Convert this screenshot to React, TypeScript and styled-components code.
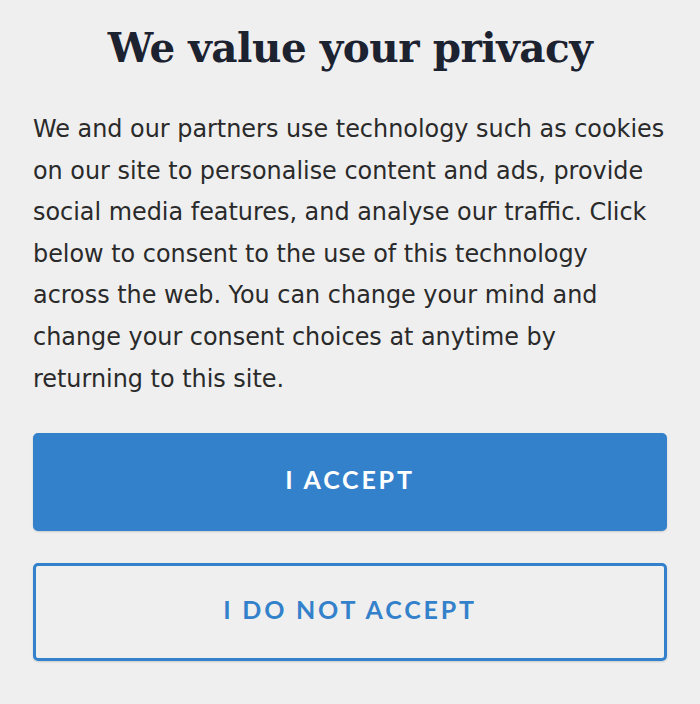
import React from "react";
import styled, { createGlobalStyle } from "styled-components";

const Global = createGlobalStyle`
  html, body { margin: 0; padding: 0; background: #efefef; }
  body { -webkit-font-smoothing: antialiased; }
`;

const Page = styled.main`
  width: 700px;
  height: 704px;
  box-sizing: border-box;
  padding: 22px 33px 0 33px;
  background: #efefef;
  display: flex;
  flex-direction: column;
  overflow: hidden;
`;

const Title = styled.h1`
  margin: 0;
  text-align: center;
  font-family: "DejaVu Serif", "Liberation Serif", serif;
  font-weight: 700;
  font-size: 40.5px;
  line-height: 52px;
  color: #1c2230;
  letter-spacing: -0.5px;
`;

const Body = styled.p`
  margin: 35px 0 0 0;
  font-family: "DejaVu Sans", "Noto Sans", sans-serif;
  font-size: 23.9px;
  line-height: 41.6px;
  color: #2a2a2a;
`;

const Actions = styled.div`
  display: flex;
  flex-direction: column;
  gap: 32px;
  margin-top: 33px;
`;

const Button = styled.button<{ $primary?: boolean }>`
  height: 98px;
  box-sizing: border-box;
  padding: 0 0 7px 0;
  border-radius: 5px;
  border: 3px solid #3481cb;
  background: ${(p) => (p.$primary ? "#3481cb" : "transparent")};
  color: ${(p) => (p.$primary ? "#ffffff" : "#3481cb")};
  font-family: Lato, "Noto Sans", sans-serif;
  font-weight: 700;
  font-size: 25px;
  letter-spacing: 2.8px;
  box-shadow: 0 1px 2px rgba(0, 0, 0, 0.15);
  cursor: pointer;
`;

export default function App() {
  return (
    <>
      <Global />
      <Page>
        <Title>We value your privacy</Title>
        <Body>
          We and our partners use technology such as cookies on our site to
          personalise content and ads, provide social media features, and
          analyse our traffic. Click below to consent to the use of this
          technology across the web. You can change your mind and change your
          consent choices at anytime by returning to this site.
        </Body>
        <Actions>
          <Button $primary>I ACCEPT</Button>
          <Button>I DO NOT ACCEPT</Button>
        </Actions>
      </Page>
    </>
  );
}
